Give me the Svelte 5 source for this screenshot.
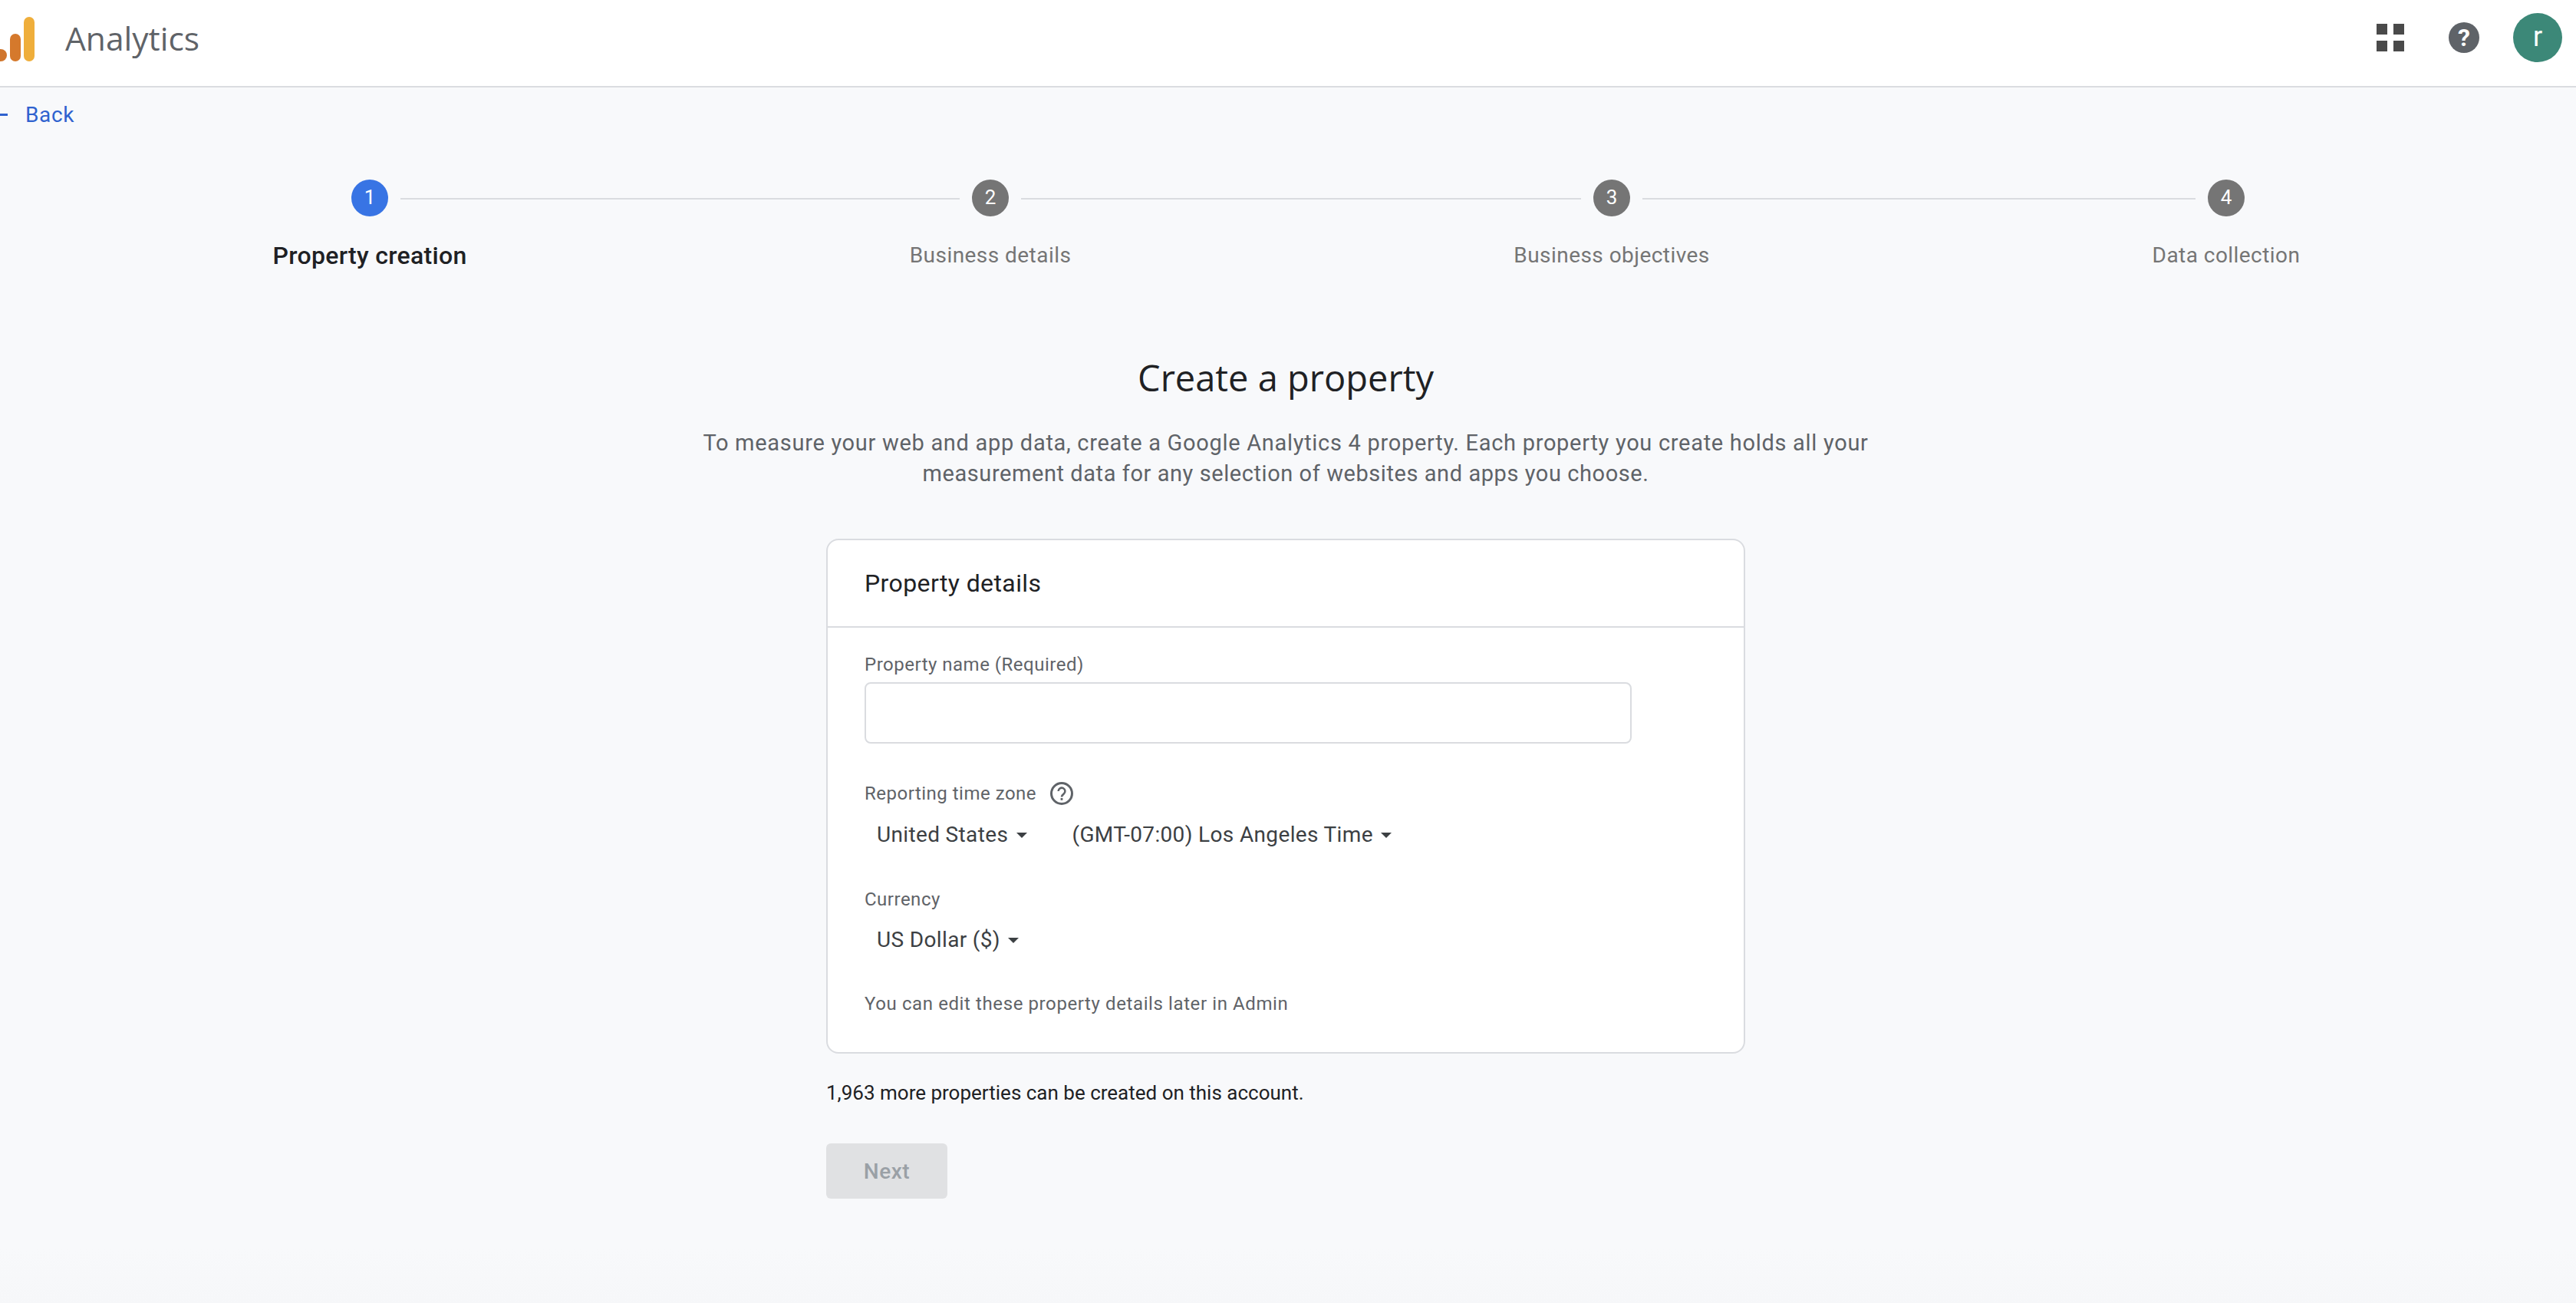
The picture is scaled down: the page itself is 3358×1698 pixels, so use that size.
<script>
  const steps = [
    { label: 'Property creation', width: 809 },
    { label: 'Business details', width: 810 },
    { label: 'Business objectives', width: 801 },
    { label: 'Data collection', width: 48 }
  ];
</script>

<header class="topbar">
  <svg class="logo" width="46" height="60" viewBox="0 0 46 60">
    <circle cx="1" cy="50" r="8" fill="#d0752c" />
    <rect x="13" y="22" width="14" height="36" rx="7" fill="#d5792c" />
    <rect x="31" y="0" width="14" height="58" rx="7" fill="#efae3b" />
  </svg>
  <span class="product">Analytics</span>
  <div class="actions">
    <div class="apps">
      <i></i><i></i><i></i><i></i>
    </div>
    <div class="help">?</div>
    <div class="avatar">r</div>
  </div>
</header>

<main class="page">
  <a class="back" href="#back">
    <span class="back-arrow"></span>
    Back
  </a>

  <ol class="stepper">
    {#each steps as step, i}
      <li class="step" style="width: {step.width}px">
        <div class="dot-row">
          <span class="dot" class:current={i === 0}>{i + 1}</span>
          {#if i < steps.length - 1}
            <span class="line"></span>
          {/if}
        </div>
        <div class="step-label" class:current={i === 0}><span>{step.label}</span></div>
      </li>
    {/each}
  </ol>

  <div class="heading">
    <h1>Create a property</h1>
    <p class="intro">
      To measure your web and app data, create a Google Analytics 4 property. Each property you create holds all your<br />
      <span class="intro-end">measurement data for any selection of websites and apps you choose.</span>
    </p>
  </div>

  <section class="column">
    <div class="card">
      <h2>Property details</h2>
      <div class="card-body">
        <label class="field-label" for="prop-name">Property name (Required)</label>
        <input id="prop-name" class="text-input" type="text" />

        <div class="field-label tz-label">
          Reporting time zone
          <svg width="30" height="30" viewBox="0 0 30 30">
            <circle cx="15" cy="15" r="13.5" fill="none" stroke="#5f6368" stroke-width="3" />
            <path d="M10.6 12a4.4 4.4 0 1 1 7 3.6c-1.6 1.2-2.6 2-2.6 4" fill="none" stroke="#5f6368" stroke-width="2.6" />
            <rect x="13.6" y="21" width="2.8" height="2.8" fill="#5f6368" />
          </svg>
        </div>
        <div class="selects">
          <div class="select">United States <span class="caret"></span></div>
          <div class="select tz">(GMT-07:00) Los Angeles Time <span class="caret"></span></div>
        </div>

        <div class="field-label currency-label">Currency</div>
        <div class="selects currency-select">
          <div class="select">US Dollar ($) <span class="caret"></span></div>
        </div>

        <p class="hint">You can edit these property details later in Admin</p>
      </div>
    </div>

    <p class="quota">1,963 more properties can be created on this account.</p>
    <button class="next" disabled>Next</button>
  </section>
</main>

<style>
  :global(body) {
    margin: 0;
    min-height: 100vh;
    background: linear-gradient(#f8f9fb calc(100% - 70px), #f6f7f9);
    font-family: Roboto, 'Liberation Sans', sans-serif;
    overflow: hidden;
  }

  .topbar {
    display: flex;
    align-items: center;
    height: 112px;
    background: #fff;
    border-bottom: 2px solid #dadce0;
    box-sizing: content-box;
  }

  .logo {
    flex: none;
    margin: -8px 0 0 0;
    overflow: hidden;
  }

  .product {
    margin: -14px 0 0 39px;
    font-family: 'Open Sans', sans-serif;
    font-size: 42.5px;
    color: #5f6368;
  }

  .actions {
    display: flex;
    align-items: center;
    margin-left: auto;
    margin-right: 18px;
    margin-top: -14px;
  }

  .apps {
    display: grid;
    grid-template-columns: 14px 14px;
    grid-auto-rows: 14px;
    gap: 8px;
  }

  .apps i {
    background: #4a4a4a;
  }

  .help {
    width: 40px;
    height: 40px;
    margin-left: 58px;
    border-radius: 50%;
    background: #5f6368;
    color: #fff;
    font-size: 32px;
    font-weight: 700;
    line-height: 40px;
    text-align: center;
  }

  .avatar {
    width: 64px;
    height: 64px;
    margin-left: 44px;
    border-radius: 50%;
    background: #3c8878;
    color: #fff;
    font-size: 36px;
    line-height: 62px;
    text-align: center;
  }

  .page {
    display: flex;
    flex-direction: column;
  }

  .back {
    display: flex;
    align-items: center;
    height: 32px;
    margin-top: 19px;
    color: #2f62cf;
    font-size: 28px;
    letter-spacing: 0.6px;
    text-decoration: none;
  }

  .back-arrow {
    width: 10px;
    height: 3px;
    margin-right: 23px;
    background: #2f62cf;
  }

  .stepper {
    display: flex;
    list-style: none;
    margin: 69px 0 0 458px;
    padding: 0;
  }

  .step {
    flex: none;
  }

  .dot-row {
    display: flex;
    align-items: center;
  }

  .dot {
    flex: none;
    width: 48px;
    height: 48px;
    border-radius: 50%;
    background: #757575;
    color: #fff;
    font-size: 26px;
    line-height: 46px;
    text-align: center;
  }

  .dot.current {
    background: #3874e4;
  }

  .line {
    flex: 1;
    height: 2px;
    margin: 1px 16px 0;
    background: #dadce0;
  }

  .step-label {
    display: flex;
    justify-content: center;
    width: 48px;
    margin-top: 31px;
    color: #757575;
    font-size: 28px;
    line-height: 40px;
    letter-spacing: 0.45px;
    white-space: nowrap;
  }

  .step-label.current {
    color: #202124;
    font-size: 32px;
    font-weight: 500;
    letter-spacing: 0.3px;
  }

  .heading {
    padding-right: 6px;
    text-align: center;
  }

  h1 {
    margin: 107px 0 0;
    font-family: 'Open Sans', sans-serif;
    font-size: 47px;
    font-weight: 400;
    line-height: 64px;
    color: #202124;
  }

  .intro {
    margin: 33px 0 0;
    color: #5f6368;
    font-size: 29px;
    line-height: 40px;
    letter-spacing: 0.7px;
  }

  .intro-end {
    letter-spacing: 0.57px;
  }

  .column {
    width: 1198px;
    margin: 65px 0 0 1077px;
  }

  .card {
    height: 671px;
    box-sizing: border-box;
    background: #fff;
    border: 2px solid #dadce0;
    border-radius: 16px;
  }

  h2 {
    display: flex;
    align-items: center;
    height: 112px;
    margin: 0;
    padding-left: 48px;
    border-bottom: 2px solid #dadce0;
    color: #202124;
    font-size: 32px;
    font-weight: 400;
    letter-spacing: 0.4px;
  }

  .card-body {
    padding: 32px 48px 0;
  }

  .field-label {
    display: block;
    color: #5f6368;
    font-size: 24px;
    line-height: 32px;
    letter-spacing: 0.5px;
  }

  .text-input {
    display: block;
    box-sizing: border-box;
    width: 1000px;
    height: 80px;
    margin-top: 7px;
    border: 2px solid #dadce0;
    border-radius: 8px;
    background: #fff;
  }

  .tz-label {
    display: flex;
    align-items: center;
    gap: 18px;
    margin-top: 49px;
  }

  .selects {
    display: flex;
    margin-top: 20px;
    padding-left: 16px;
    gap: 59px;
  }

  .currency-select {
    margin-top: 19px;
  }

  .select {
    display: flex;
    align-items: center;
    color: #3c4043;
    font-size: 28px;
    line-height: 36px;
    letter-spacing: 0.35px;
    white-space: pre;
  }

  .caret {
    width: 0;
    height: 0;
    margin-left: 3px;
    border: 7px solid transparent;
    border-top-color: #3c4043;
    border-bottom: 0;
  }

  .currency-label {
    margin-top: 50px;
  }

  .hint {
    margin: 49px 0 0;
    color: #5f6368;
    font-size: 24px;
    line-height: 32px;
    letter-spacing: 0.6px;
  }

  .quota {
    margin: 35px 0 0;
    color: #202124;
    font-size: 26px;
    line-height: 32px;
    letter-spacing: 0;
  }

  .next {
    display: block;
    width: 158px;
    height: 72px;
    margin-top: 50px;
    padding: 0;
    border: 0;
    border-radius: 6px;
    background: #e0e1e3;
    color: #9aa0a6;
    font-family: inherit;
    font-size: 28px;
    font-weight: 500;
    letter-spacing: 0.5px;
  }
</style>
